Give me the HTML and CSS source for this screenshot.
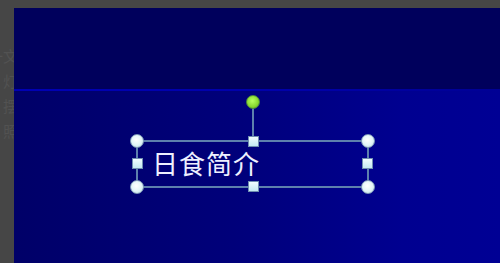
FILE: index.html
```html
<!DOCTYPE html>
<html>
<head>
<meta charset="utf-8">
<link rel="stylesheet" href="styles.css">
</head>
<body>
<div class="workspace">
  <div class="thumbs">
    <span>一文</span>
    <span>灯</span>
    <span>摆</span>
    <span>照</span>
  </div>
  <div class="slide">
    <div class="title-band"></div>
    <div class="rule"></div>
    <div class="body-band"></div>
    <div class="selection">
      <div class="textbox">日食简介</div>
      <span class="stem"></span>
      <span class="rotate"></span>
      <span class="h c tl"></span>
      <span class="h c tr"></span>
      <span class="h c bl"></span>
      <span class="h c br"></span>
      <span class="h s tm"></span>
      <span class="h s bm"></span>
      <span class="h s ml"></span>
      <span class="h s mr"></span>
    </div>
  </div>
</div>
</body>
</html>
```
FILE: styles.css
```css
html, body {
  margin: 0;
  padding: 0;
  background: #464646;
  width: 500px;
  height: 263px;
  overflow: hidden;
}
.workspace {
  display: flex;
  padding-top: 8px;
  height: 255px;
}
.thumbs {
  width: 14px;
  flex: none;
  overflow: hidden;
  display: flex;
  flex-direction: column;
  align-items: flex-end;
  padding-top: 38px;
  gap: 6px;
  font-family: "Noto Sans CJK SC", sans-serif;
  font-size: 15px;
  line-height: 19px;
  color: #525252;
  white-space: nowrap;
}
.thumbs span {
  margin-right: -4px;
}
.slide {
  position: relative;
  flex: 1;
  display: flex;
  flex-direction: column;
  background: #00005e;
}
.title-band {
  height: 81px;
  background: #00005c;
}
.rule {
  height: 2px;
  background: linear-gradient(90deg, #0000b4 0%, #0000a8 60%, #000094 100%);
}
.body-band {
  flex: 1;
  background: linear-gradient(90deg, #000068 0%, #00007a 45%, #000090 80%, #000094 100%);
}
.selection {
  position: absolute;
  left: 122px;
  top: 132px;
  width: 233px;
  height: 48px;
  border: 2px solid #5d80ad;
  box-sizing: border-box;
}
.textbox {
  font-family: "Noto Sans CJK SC", sans-serif;
  font-weight: 400;
  font-size: 26px;
  line-height: 26px;
  color: #eef0ff;
  padding: 8px 0 0 14px;
  letter-spacing: 1px;
}
.stem {
  position: absolute;
  left: 114px;
  top: -40px;
  width: 2px;
  height: 40px;
  background: #5d80ad;
}
.rotate {
  position: absolute;
  left: 108px;
  top: -47px;
  width: 14px;
  height: 14px;
  border-radius: 50%;
  background: radial-gradient(circle at 45% 40%, #b8ff60 0%, #88d830 60%, #5aa020 100%);
  box-sizing: border-box;
  border: 1px solid #4e8a3c;
}
.h {
  position: absolute;
  box-sizing: border-box;
}
.c {
  width: 14px;
  height: 14px;
  border-radius: 50%;
  background: radial-gradient(circle at 45% 40%, #ffffff 0%, #e4f6f8 50%, #b8dce4 100%);
  border: 1px solid #7f9ab8;
}
.s {
  width: 11px;
  height: 11px;
  background: linear-gradient(180deg, #f0fcff 0%, #c4e8f2 100%);
  border: 1px solid #6f8eb0;
}
.tl { left: -8px; top: -8px; }
.tr { right: -8px; top: -8px; }
.bl { left: -8px; bottom: -8px; }
.br { right: -8px; bottom: -8px; }
.tm { left: 110px; top: -6px; }
.bm { left: 110px; bottom: -6px; }
.ml { left: -6px; top: 16px; }
.mr { right: -6px; top: 16px; }
```
